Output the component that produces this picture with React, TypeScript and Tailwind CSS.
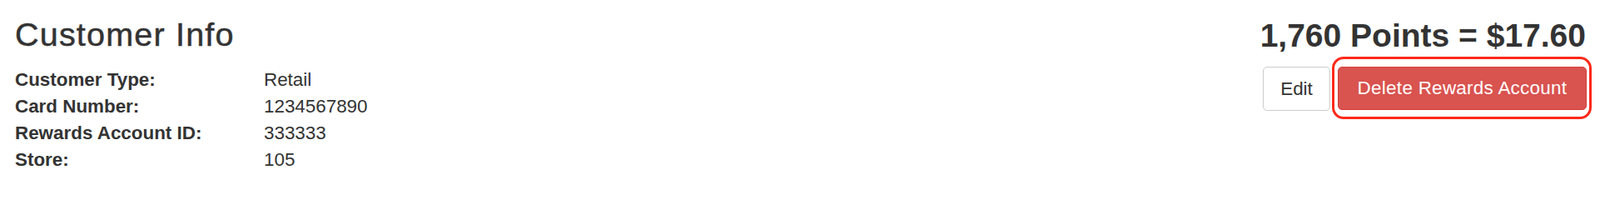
export default function App() {
  const rows = [
    ["Customer Type:", "Retail"],
    ["Card Number:", "1234567890"],
    ["Rewards Account ID:", "333333"],
    ["Store:", "105"],
  ];
  return (
    <div
      className="w-[1922px] h-[232px] bg-white text-[#333333] flex justify-between pl-[18px] pr-[16px]"
      style={{ fontFamily: '"Liberation Sans", Arial, sans-serif' }}
    >
      <div className="pt-[20px]">
        <h3 className="text-[39.5px] leading-[42px] font-normal m-0 tracking-[1.2px] [-webkit-text-stroke:0.5px_#333333]">
          Customer Info
        </h3>
        <div className="mt-[17.5px] grid grid-cols-[299px_auto] text-[22.4px] leading-[32px]">
          {rows.map(([k, v]) => (
            <div key={k} className="contents">
              <div className="font-bold">{k}</div>
              <div>{v}</div>
            </div>
          ))}
        </div>
      </div>
      <div className="pt-[21px] flex flex-col items-end">
        <div className="text-[39px] leading-[44px] font-bold pr-[1px]">1,760 Points = $17.60</div>
        <div className="mt-[15px] flex gap-[9px] text-[22.4px] leading-[32px]">
          <button className="w-[81px] h-[53px] bg-white border border-[#cccccc] rounded-[5px] text-[#333333]">
            Edit
          </button>
          <div className="relative">
            <button className="w-[299px] h-[52px] bg-[#d9534f] border border-[#d43f3a] rounded-[5px] text-white tracking-[0.3px]">
              Delete Rewards Account
            </button>
            <div className="absolute left-[-7px] right-[-6px] top-[-12px] bottom-[-10px] border-[3px] border-[#ff2a1a] rounded-[14px] pointer-events-none" />
          </div>
        </div>
      </div>
    </div>
  );
}
